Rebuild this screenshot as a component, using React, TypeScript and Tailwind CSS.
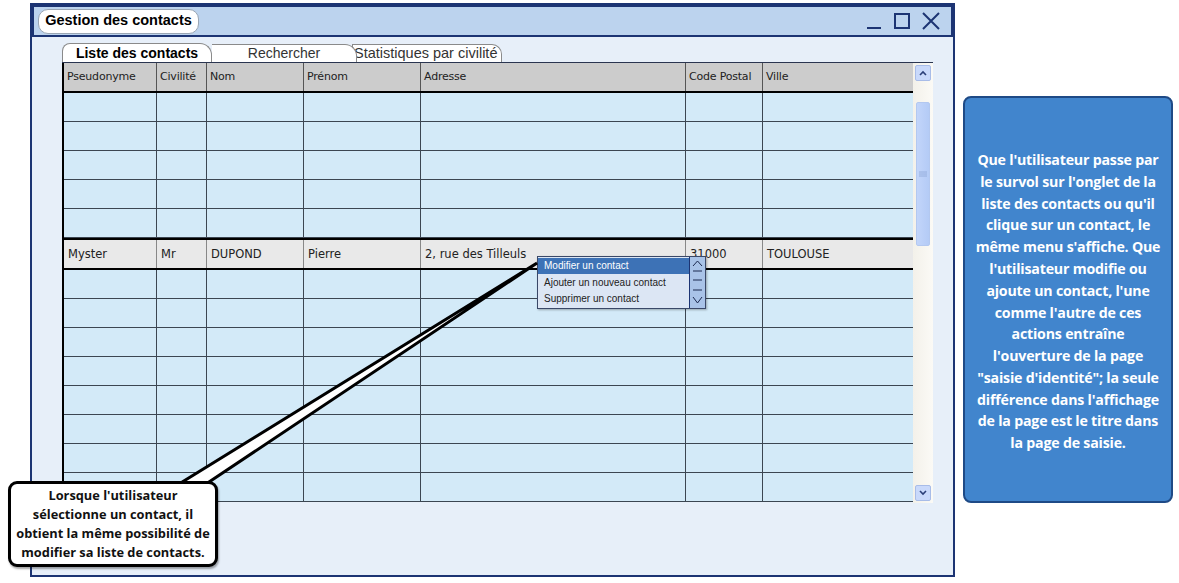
import React from 'react';

const cols = [93, 50, 97, 117, 265, 77, 152];
const headers = ['Pseudonyme', 'Civilité', 'Nom', 'Prénom', 'Adresse', 'Code Postal', 'Ville'];
const selected = ['Myster', 'Mr', 'DUPOND', 'Pierre', '2, rue des Tilleuls', '31000', 'TOULOUSE'];
const gridCols = 'grid grid-cols-[93px_50px_97px_117px_265px_77px_152px]';

function EmptyRow() {
  return (
    <div className={`${gridCols} h-[29px]`}>
      {cols.map((_, i) => (
        <div key={i} className="border-r border-b border-[#3b4652] bg-[#d3eaf8]" />
      ))}
    </div>
  );
}

function WindowControls() {
  return (
    <div className="flex items-center gap-[10px] pr-[10px]">
      <svg width="18" height="18" viewBox="0 0 18 18">
        <line x1="2" y1="16" x2="16" y2="16" stroke="#1c3473" strokeWidth="2" />
      </svg>
      <svg width="18" height="18" viewBox="0 0 18 18">
        <rect x="2" y="2" width="14" height="14" fill="none" stroke="#1c3473" strokeWidth="2" />
      </svg>
      <svg width="20" height="20" viewBox="0 0 20 20">
        <path d="M2 2 L18 18 M18 2 L2 18" stroke="#1c3473" strokeWidth="2" />
      </svg>
    </div>
  );
}

function TableScrollbar() {
  return (
    <div className="w-[20px] h-[440px] bg-gradient-to-r from-[#f3f1ea] to-[#fbfaf6] flex flex-col items-center py-[2px]">
      <div className="w-[16px] h-[16px] rounded-[2px] border border-[#a8bce8] bg-[#c9d9fb] flex items-center justify-center">
        <svg width="8" height="6" viewBox="0 0 8 6">
          <path d="M1 5 L4 2 L7 5" fill="none" stroke="#2b3f78" strokeWidth="1.6" />
        </svg>
      </div>
      <div className="mt-[21px] w-[14px] h-[144px] rounded-[2px] border border-[#b3c8f0] bg-gradient-to-r from-[#c2d5fa] to-[#b4cbf6] flex items-center justify-center">
        <svg width="8" height="6" viewBox="0 0 8 6">
          <path d="M0 1 H8 M0 3 H8 M0 5 H8" stroke="#8ea6d6" strokeWidth="0.8" />
        </svg>
      </div>
      <div className="flex-1" />
      <div className="w-[16px] h-[16px] rounded-[2px] border border-[#a8bce8] bg-[#c9d9fb] flex items-center justify-center">
        <svg width="8" height="6" viewBox="0 0 8 6">
          <path d="M1 1 L4 4 L7 1" fill="none" stroke="#2b3f78" strokeWidth="1.6" />
        </svg>
      </div>
    </div>
  );
}

function ContextMenu() {
  return (
    <div className="absolute left-[537px] top-[256px] w-[169px] h-[53px] border border-[#3a4868] bg-[#dce6f4] flex shadow-[1px_1px_2px_rgba(0,0,0,0.3)] font-['Liberation_Sans',sans-serif] text-[10px]">
      <div className="flex-1 flex flex-col pt-[1px]">
        <div className="h-[16px] bg-[#3d72b6] text-white pl-[6px] leading-[16px]">Modifier un contact</div>
        <div className="h-[17px] text-[#222] pl-[6px] leading-[17px]">Ajouter un nouveau contact</div>
        <div className="h-[16px] text-[#222] pl-[6px] leading-[15px]">Supprimer un contact</div>
      </div>
      <div className="w-[16px] border-l border-[#1c3473] bg-[#a9c3e8]">
        <svg width="15" height="51" viewBox="0 0 15 51">
          <path d="M3 9 L7.5 4 L12 9" fill="none" stroke="#1c2a50" strokeWidth="1" />
          <path d="M3 14 H12 M3 23 H12 M3 33 H12" stroke="#1c2a50" strokeWidth="1" />
          <path d="M3 40 L7.5 46 L12 40" fill="none" stroke="#1c2a50" strokeWidth="1" />
        </svg>
      </div>
    </div>
  );
}

export default function App() {
  return (
    <div className="relative w-[1179px] h-[583px] bg-white overflow-hidden flex items-start">
      {/* window */}
      <div className="ml-[30px] mt-[3px] w-[925px] h-[574px] border-2 border-[#1c3473] bg-[#e7eff9] flex flex-col">
        <div className="h-[32px] bg-[#bcd3ee] border-2 border-[#1c3473] flex items-center justify-between">
          <div className="ml-[4px] w-[161px] h-[25px] bg-white border border-[#9aa6b4] rounded-[10px] flex items-center justify-center font-['Liberation_Sans',sans-serif] font-bold text-[14.5px] text-black">
            Gestion des contacts
          </div>
          <WindowControls />
        </div>

        <div className="pl-[30px] pt-[6px]">
          {/* tabs */}
          <div className="flex h-[19px] items-end font-['Liberation_Sans',sans-serif]">
            <div className="relative z-20 w-[150px] h-[19px] bg-white border border-[#8a8a8a] border-b-0 rounded-tl-[8px] rounded-tr-[12px] flex items-center justify-center text-[14px] font-semibold text-black">
              Liste des contacts
            </div>
            <div className="relative z-10 w-[145px] h-[18px] bg-white border border-[#8a8a8a] border-b-0 border-l-0 rounded-tr-[12px] flex items-center justify-center text-[14px] text-[#333]">
              Rechercher
            </div>
            <div className="relative z-0 -ml-[5px] w-[150px] h-[18px] bg-white border border-[#8a8a8a] border-b-0 rounded-tr-[10px] whitespace-nowrap text-[14.5px] text-[#333] leading-[17px] pl-[1px]">
              Statistiques par civilité
            </div>
          </div>

          {/* table + scrollbar */}
          <div className="flex border-t border-[#2a3550] w-[871px]">
            <div className="w-[851px] border-l-2 border-black font-['DejaVu_Sans',sans-serif] text-[11px] text-[#222]">
              <div className={`${gridCols} h-[30px] bg-[#cccccc] border-b-2 border-black`}>
                {headers.map((h, i) => (
                  <div key={h} className={`flex items-center pl-[3px] ${i < 6 ? 'border-r border-[#555]' : ''} tracking-[-0.2px]`}>
                    {h}
                  </div>
                ))}
              </div>
              {[0, 1, 2, 3, 4].map((i) => (
                <EmptyRow key={i} />
              ))}
              <div className={`${gridCols} h-[32px] -ml-[2px] w-[853px] border-2 border-black bg-[#e9e9e9] text-[11.5px]`}>
                {selected.map((v, i) => (
                  <div key={i} className={`flex items-center pl-[4px] pt-[1px] ${i < 6 ? 'border-r border-[#888]' : ''}`}>
                    {v}
                  </div>
                ))}
              </div>
              {[0, 1, 2, 3, 4, 5, 6, 7].map((i) => (
                <EmptyRow key={i} />
              ))}
            </div>
            <TableScrollbar />
          </div>
        </div>
      </div>

      {/* note on the right */}
      <div className="ml-[8px] mt-[96px] w-[210px] h-[407px] rounded-[8px] border-2 border-[#1e4a86] bg-[#4185cd] flex items-center justify-center text-center text-white font-['Open_Sans',sans-serif] font-bold text-[14.2px] leading-[21.8px] pt-[4px] tracking-[-0.2px]">
        <p>
          Que l'utilisateur passe par
          <br />le survol sur l'onglet de la
          <br />liste des contacts ou qu'il
          <br />clique sur un contact, le
          <br />même menu s'affiche. Que
          <br />l'utilisateur modifie ou
          <br />ajoute un contact, l'une
          <br />comme l'autre de ces
          <br />actions entraîne
          <br />l'ouverture de la page
          <br />"saisie d'identité"; la seule
          <br />différence dans l'affichage
          <br />de la page est le titre dans
          <br />la page de saisie.
        </p>
      </div>

      <ContextMenu />

      {/* callout pointer */}
      <svg className="absolute left-0 top-0 pointer-events-none" width="1179" height="583">
        <polygon points="179,484 206,484 537,263" fill="white" stroke="black" strokeWidth="3" strokeLinejoin="miter" />
      </svg>

      {/* callout */}
      <div className="absolute left-[8px] top-[481px] w-[210px] h-[86px] rounded-[9px] border-[3px] border-black bg-white shadow-[1px_2px_2px_rgba(0,0,0,0.35)] flex items-center justify-center text-center font-['Open_Sans',sans-serif] font-bold text-[12.8px] leading-[19px] text-[#111]">
        <p>
          Lorsque l'utilisateur
          <br />sélectionne un contact, il
          <br />obtient la même possibilité de
          <br />modifier sa liste de contacts.
        </p>
      </div>
    </div>
  );
}
